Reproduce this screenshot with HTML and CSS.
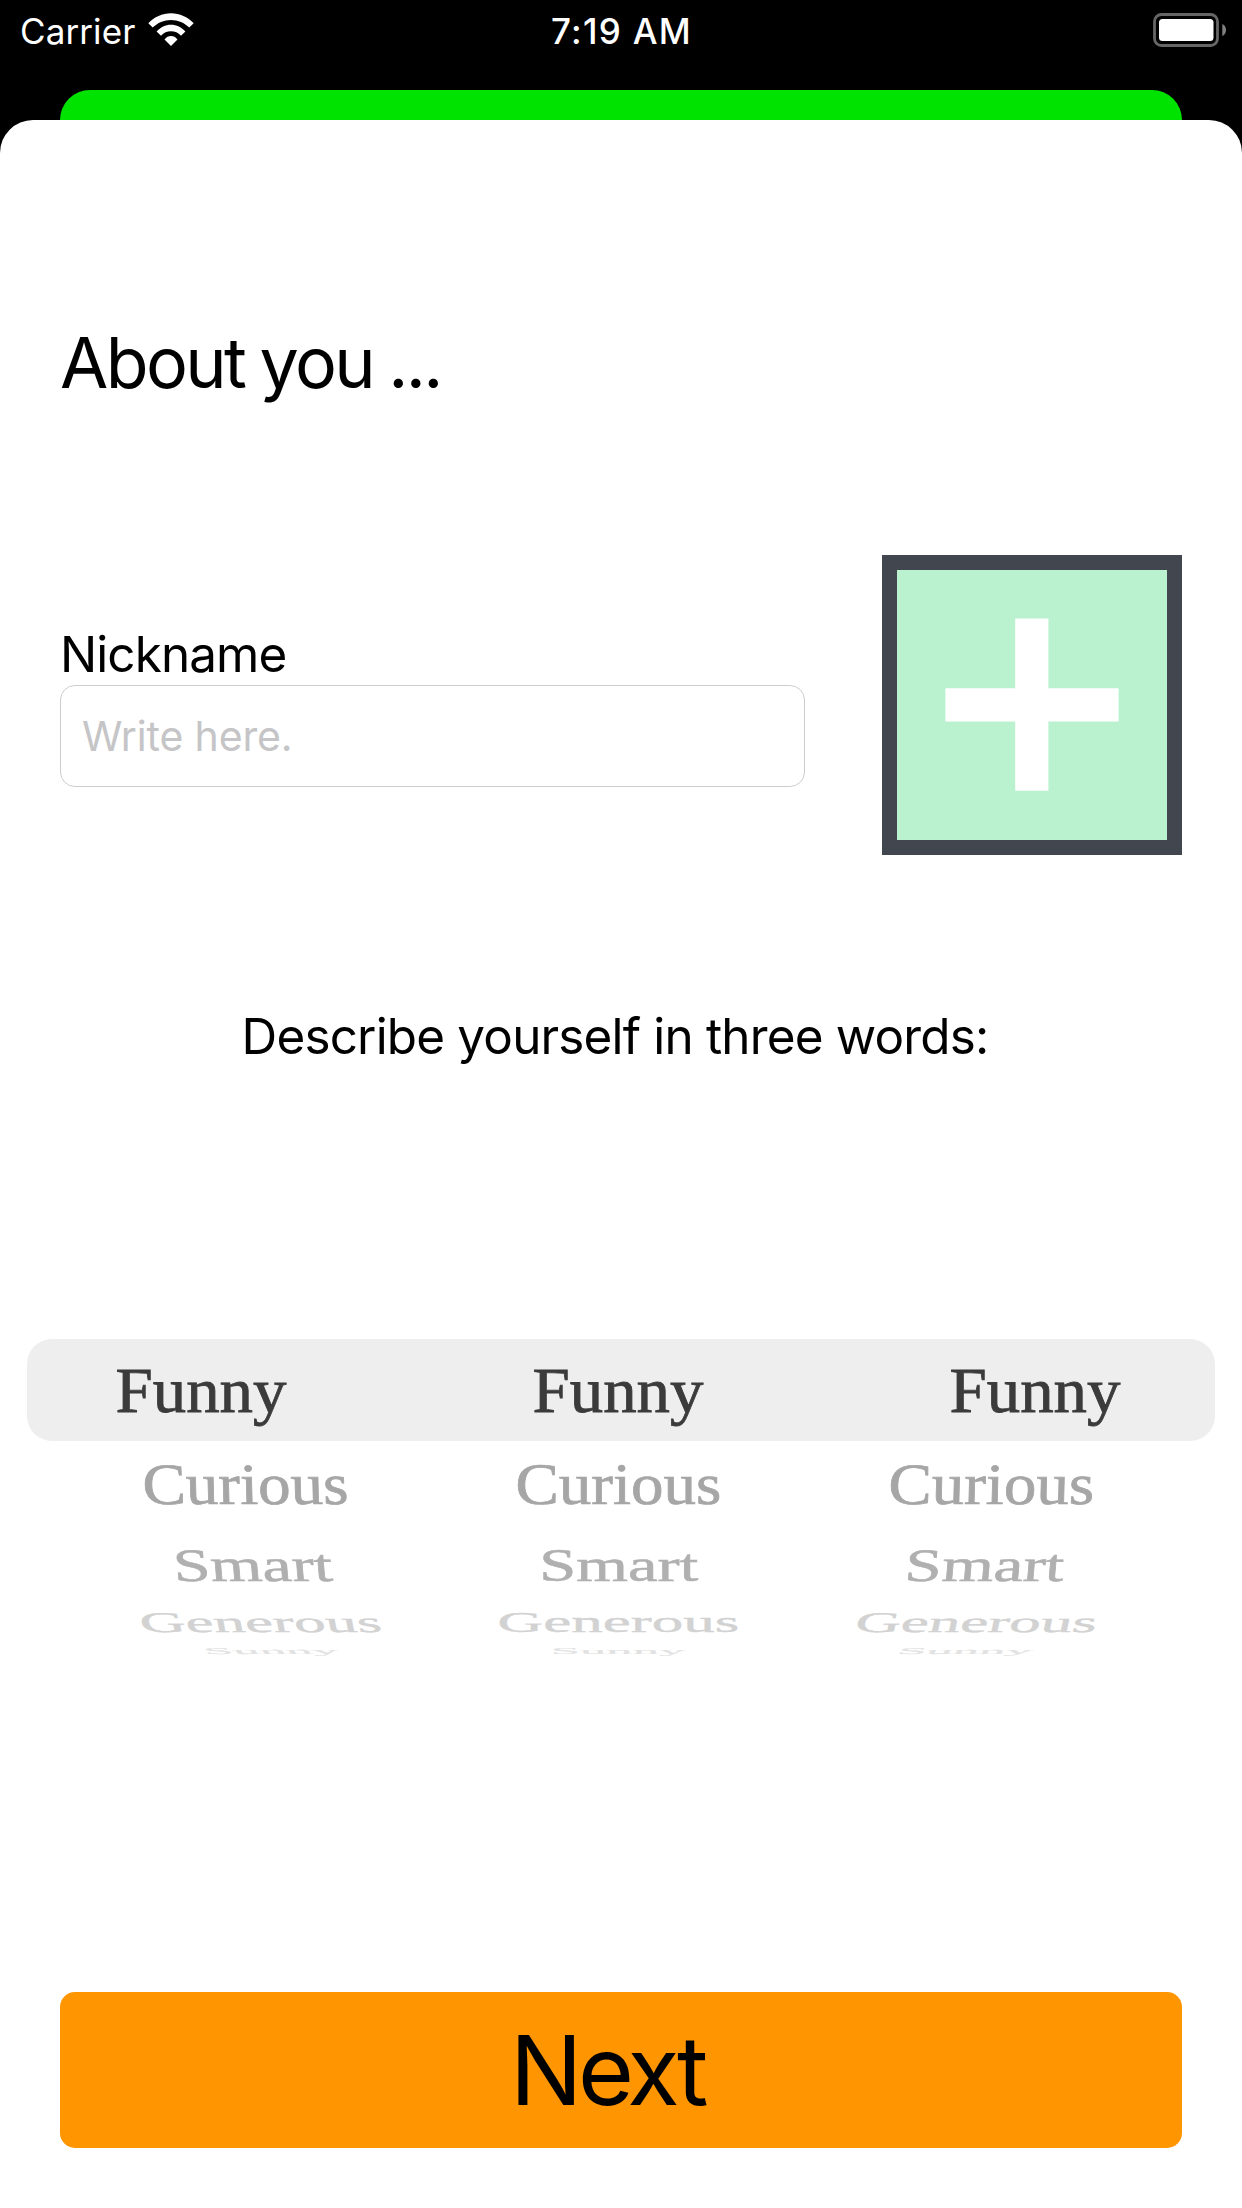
FILE: index.html
```html
<!DOCTYPE html>
<html lang="en">
<head>
<meta charset="utf-8">
<title>About you</title>
<link rel="stylesheet" href="styles.css">
</head>
<body>
<header class="status">
  <div class="status-left">
    <span class="carrier">Carrier</span>
    <svg class="wifi" width="46" height="34" viewBox="0 0 46 34" fill="#fff">
      <path d="M0.3 10.2C6.3 4 14.3.3 23 .3s16.700 3.700 22.700 9.900L41.300 14.600C36.500 9.700 30 6.900 23 6.900S9.500 9.700 4.700 14.600Z"/>
      <path d="M8.600 18.400C12.400 14.300 17.400 11.700 23 11.700s10.600 2.600 14.400 6.700L33 22.700C30.300 19.800 26.900 18.300 23 18.300s-7.300 1.500-10 4.400Z"/>
      <path d="M16.500 26.400C18.300 24.200 20.500 23 23 23s4.700 1.200 6.500 3.400L23 33Z"/>
    </svg>
  </div>
  <span class="time">7:19 AM</span>
  <svg class="battery" width="74" height="34" viewBox="0 0 74 34">
    <rect x="1.500" y="1.500" width="63" height="31" rx="7" fill="none" stroke="#666" stroke-width="2.800"/>
    <rect x="6" y="6" width="54.500" height="22" rx="3.500" fill="#fff"/>
    <path d="M69.300 11c5 2.200 5 10 0 12.200Z" fill="#808080"/>
  </svg>
</header>
<div class="back-card"></div>
<main class="sheet">
  <h1 class="title">About you ...</h1>
  <section class="profile">
    <div class="field">
      <label class="label" for="nickname">Nickname</label>
      <input class="input" id="nickname" type="text" placeholder="Write here.">
    </div>
    <button class="photo" aria-label="Add photo">
      <svg width="174" height="174" viewBox="0 0 174 174" fill="#fff">
        <path d="M70.200 .5h33.200v69.700h70.200v33.300h-70.200v69.200H70.200v-69.200H.4V70.200h69.800Z"/>
      </svg>
    </button>
  </section>
  <p class="prompt">Describe yourself in three words:</p>
  <section class="picker">
    <div class="row selected"><span>Funny</span><span>Funny</span><span>Funny</span></div>
    <div class="row near"><span>Curious</span><span>Curious</span><span>Curious</span></div>
    <div class="row mid"><span>Smart</span><span>Smart</span><span>Smart</span></div>
    <div class="row far"><span>Generous</span><span>Generous</span><span>Generous</span></div>
    <div class="row edge"><span>Sunny</span><span>Sunny</span><span>Sunny</span></div>
  </section>
  <button class="next">Next</button>
</main>
</body>
</html>
```
FILE: styles.css
```css
* { box-sizing: border-box; }
body {
  margin: 0;
  width: 1242px;
  height: 2208px;
  overflow: hidden;
  background: #000;
  color: #000;
  font-family: Inter, "Liberation Sans", sans-serif;
}
button, input { font-family: inherit; margin: 0; }
svg { display: block; }

.status {
  display: grid;
  grid-template-columns: 1fr auto 1fr;
  height: 90px;
  padding: 0 15px 0 20px;
  color: #fff;
  font-size: 35px;
  line-height: 63px;
}
.status-left { display: flex; gap: 13px; }
.carrier { letter-spacing: 0.1px; }
.wifi { margin-top: 13px; }
.time { margin-right: 4px; font-weight: 500; letter-spacing: 1.3px; }
.battery { margin-top: 13px; justify-self: end; }

.back-card {
  height: 30px;
  margin: 0 60px;
  border-radius: 30px 30px 0 0;
  background: #00e300;
}
.sheet {
  display: flex;
  flex-direction: column;
  height: 2088px;
  padding: 192px 60px 60px;
  border-radius: 33px 33px 0 0;
  background: #fff;
}
.title {
  margin: 0;
  font-size: 70px;
  font-weight: 400;
  line-height: 101px;
  letter-spacing: -2.6px;
  word-spacing: -2px;
}
.profile {
  display: flex;
  justify-content: space-between;
  height: 300px;
  margin-top: 142px;
}
.field {
  display: flex;
  flex-direction: column;
  width: 745px;
  padding-top: 68px;
}
.label {
  height: 62px;
  font-size: 49.400px;
  line-height: 63px;
  letter-spacing: -0.9px;
}
.input {
  width: 745px;
  height: 102px;
  padding: 0 22px 0 21px;
  border: 1px solid #cdcdcd;
  border-radius: 15px;
  background: #fff;
  font-size: 41px;
  letter-spacing: -0.15px;
  outline: none;
}
.input::placeholder { color: #c5c5c7; opacity: 1; }
.photo {
  display: flex;
  align-items: center;
  justify-content: center;
  width: 300px;
  height: 300px;
  padding: 0;
  border: 15px solid #42464e;
  background: #baf2cf;
}
.prompt {
  margin: 151px 0 0;
  padding-right: 12px;
  font-size: 49.400px;
  line-height: 60px;
  letter-spacing: -0.8px;
  text-align: center;
}

/* Wheel rows shrink and converge as they turn away from the selection. */
.picker {
  display: flex;
  flex-direction: column;
  align-items: center;
  margin: 273px -33px 0;
  font-family: "Liberation Serif", serif;
  font-size: 63.400px;
}
.row {
  display: grid;
  grid-template-columns: repeat(3, var(--pitch));
  justify-content: center;
  justify-items: center;
  height: var(--height);
  padding-right: 5px;
}
.row span {
  transform: skewX(var(--lean, 0deg)) scale(var(--sx), var(--sy));
  -webkit-text-stroke: 0.8px currentColor;
}
.row span:first-child { --lean: var(--lean-in); }
.row span:last-child { --lean: var(--lean-out); }
.selected {
  --pitch: 417px; --height: 102px; --sx: 1.055; --sy: 1; --lean-in: 0deg; --lean-out: 0deg;
  align-self: stretch;
  border-radius: 25px;
  background: #eee;
  color: #3b3b3b;
  line-height: 104px;
}
.near {
  --pitch: 373px; --height: 86px; --sx: 1.025; --sy: 0.920; --lean-in: 1.500deg; --lean-out: -1.500deg;
  color: #a6a6a6;
  line-height: 88px;
}
.mid {
  --pitch: 366px; --height: 75px; --sx: 1.050; --sy: 0.730; --lean-in: 5deg; --lean-out: -5deg;
  color: #b0b0b0;
  line-height: 78px;
}
.far {
  --pitch: 358px; --height: 41px; --sx: 0.995; --sy: 0.450; --lean-in: 11deg; --lean-out: -12deg;
  color: #d2d2d2;
  line-height: 41px;
}
.edge {
  --pitch: 347px; --height: 15px; --sx: 0.830; --sy: 0.140; --lean-in: 32deg; --lean-out: -32deg;
  color: #e2e2e2;
  line-height: 17px;
}

.next {
  height: 156px;
  margin-top: 334px;
  padding: 0 28px 0 0;
  border: 0;
  border-radius: 15px;
  background: #ff9500;
  color: #000;
  font-size: 96px;
  line-height: 156px;
  letter-spacing: -4.500px;
}
```
